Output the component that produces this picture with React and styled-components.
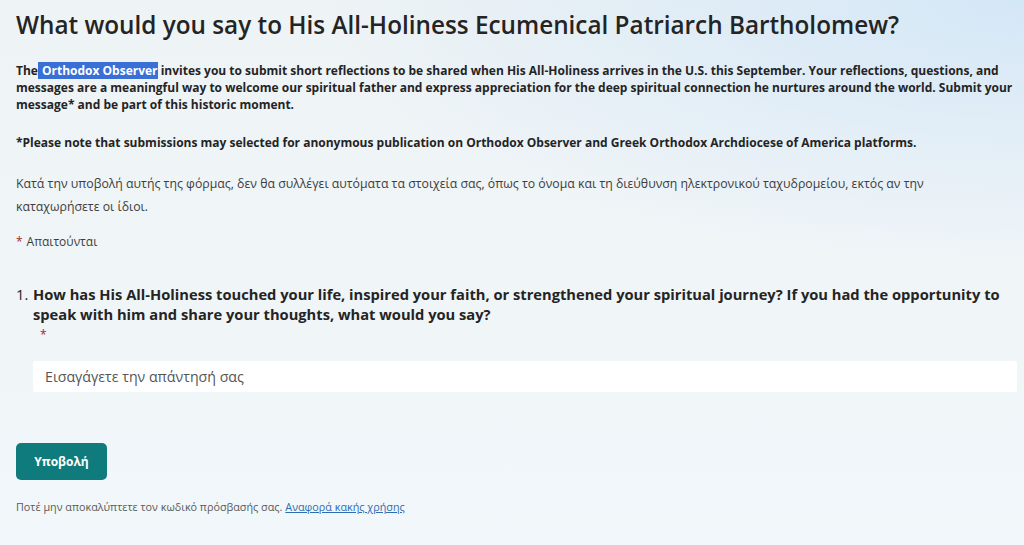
import React from "react";
import styled, { createGlobalStyle } from "styled-components";

const GlobalStyle = createGlobalStyle`
  html, body {
    margin: 0;
    padding: 0;
  }
  body {
    font-family: "Open Sans", "Noto Sans", sans-serif;
    color: #242424;
  }
`;

const Page = styled.div`
  width: 1024px;
  height: 545px;
  overflow: hidden;
  box-sizing: border-box;
  padding: 8px 6px 0 16px;
  background:
    radial-gradient(ellipse 700px 260px at 100% 0%, #d4e7f7 0%, rgba(214, 232, 247, 0) 100%),
    linear-gradient(180deg, #eef3f5 0%, #f0f5f8 60%, #f1f7fa 100%);
`;

const Title = styled.h1`
  margin: 0;
  font-size: 24.3px;
  line-height: 34px;
  font-weight: 600;
  color: #242424;
`;

const Intro = styled.p`
  margin: 20px 0 0;
  font-size: 12px;
  line-height: 17px;
  font-weight: 700;
  color: #242424;
`;

const Highlight = styled.span`
  padding-left: 4px;
  background: #3a6fd6;
  color: #ffffff;
`;

const Note = styled.p`
  margin: 21px 0 0;
  font-size: 12px;
  line-height: 17px;
  font-weight: 700;
`;

const Privacy = styled.p`
  margin: 21px 0 0;
  max-width: 940px;
  font-size: 12.3px;
  line-height: 23px;
  font-weight: 400;
  color: #3d3d3d;
`;

const Required = styled.p`
  margin: 14px 0 0;
  font-size: 12px;
  line-height: 20px;
  color: #3d3d3d;
`;

const Star = styled.span`
  color: #a4262c;
  margin-right: 4px;
`;

const Question = styled.div`
  display: flex;
  margin-top: 32px;
`;

const Number = styled.span`
  width: 17px;
  font-size: 14.7px;
  line-height: 20px;
  color: #242424;
`;

const QuestionBody = styled.div`
  flex: 1;
  display: flex;
  flex-direction: column;
`;

const QuestionText = styled.div`
  font-size: 14.7px;
  line-height: 20px;
  font-weight: 700;
  color: #242424;
`;

const QuestionStar = styled.span`
  color: #a4262c;
  font-size: 12px;
  line-height: 14px;
  padding: 4px 0 0 7px;
`;

const AnswerInput = styled.input`
  margin-top: 19px;
  width: 984px;
  height: 31px;
  box-sizing: border-box;
  border: none;
  outline: none;
  border-radius: 2px;
  background: #ffffff;
  padding: 0 12px;
  font-family: inherit;
  font-size: 14.2px;
  color: #242424;
  &::placeholder {
    color: #555555;
  }
`;

const SubmitButton = styled.button`
  margin-top: 51px;
  width: 91px;
  height: 37px;
  border: none;
  border-radius: 5px;
  background: #0f7b7d;
  color: #ffffff;
  font-family: inherit;
  font-size: 12px;
  font-weight: 700;
  cursor: pointer;
`;

const Footer = styled.p`
  margin: 20px 0 0;
  font-size: 10.8px;
  line-height: 14px;
  color: #5a5a5a;
`;

const ReportLink = styled.a`
  color: #2f6db3;
  text-decoration: underline;
  margin-left: 3px;
`;

export default function App() {
  return (
    <Page>
      <GlobalStyle />
      <Title>What would you say to His All-Holiness Ecumenical Patriarch Bartholomew?</Title>
      <Intro>
        The<Highlight>Orthodox Observer</Highlight> invites you to submit short reflections to be
        shared when His All-Holiness arrives in the U.S. this September. Your reflections,
        questions, and messages are a meaningful way to welcome our spiritual father and express
        appreciation for the deep spiritual connection he nurtures around the world. Submit your
        message* and be part of this historic moment.
      </Intro>
      <Note>
        *Please note that submissions may selected for anonymous publication on Orthodox Observer
        and Greek Orthodox Archdiocese of America platforms.
      </Note>
      <Privacy>
        Κατά την υποβολή αυτής της φόρμας, δεν θα συλλέγει αυτόματα τα στοιχεία σας, όπως το όνομα
        και τη διεύθυνση ηλεκτρονικού ταχυδρομείου, εκτός αν την καταχωρήσετε οι ίδιοι.
      </Privacy>
      <Required>
        <Star>*</Star>Απαιτούνται
      </Required>
      <Question>
        <Number>1.</Number>
        <QuestionBody>
          <QuestionText>
            How has His All-Holiness touched your life, inspired your faith, or strengthened your
            spiritual journey? If you had the opportunity to speak with him and share your
            thoughts, what would you say?
          </QuestionText>
          <QuestionStar>*</QuestionStar>
          <AnswerInput placeholder="Εισαγάγετε την απάντησή σας" />
        </QuestionBody>
      </Question>
      <SubmitButton>Υποβολή</SubmitButton>
      <Footer>
        Ποτέ μην αποκαλύπτετε τον κωδικό πρόσβασής σας.
        <ReportLink href="#">Αναφορά κακής χρήσης</ReportLink>
      </Footer>
    </Page>
  );
}
